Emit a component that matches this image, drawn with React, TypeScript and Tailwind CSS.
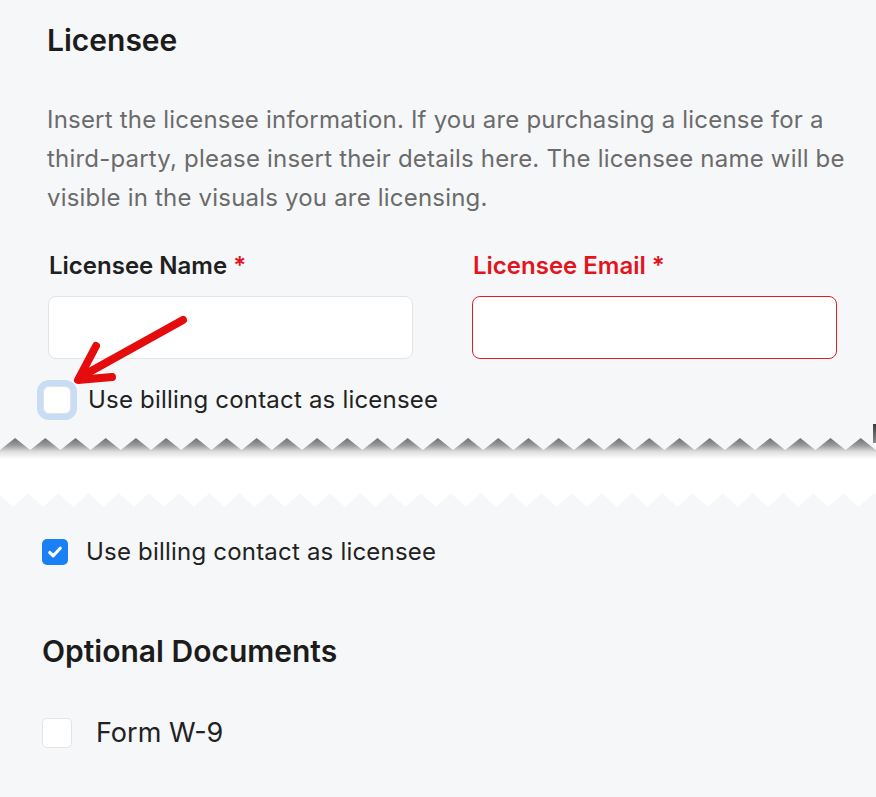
import React from "react";

const P = 30.2;

function tornPaths() {
  const topPts: string[] = [];
  for (let k = -1; k < 31; k++) {
    const x0 = k * P;
    topPts.push(`${x0.toFixed(1)},29`);
    topPts.push(`${(x0 + P / 2).toFixed(1)},17`);
  }
  const botPts: string[] = [];
  for (let k = 31; k >= -1; k--) {
    const xt = 13 + k * P;
    botPts.push(`${(xt + P / 2).toFixed(1)},72`);
    botPts.push(`${xt.toFixed(1)},86`);
  }
  const white = `M${topPts.join(" L")} L${botPts.join(" L")} Z`;
  const shade = `M${topPts.join(" L")} L900,38 L-40,38 Z`;
  return { white, shade };
}

function Torn() {
  const { white, shade } = tornPaths();
  return (
    <svg width="876" height="92" viewBox="0 0 876 92" className="block">
      <defs>
        <linearGradient id="sh" x1="0" y1="17" x2="0" y2="38" gradientUnits="userSpaceOnUse">
          <stop offset="0" stopColor="#6f6f6f" />
          <stop offset="0.35" stopColor="#9a9a9a" />
          <stop offset="0.65" stopColor="#dedede" />
          <stop offset="1" stopColor="#ffffff" />
        </linearGradient>
        <linearGradient id="mk" x1="0" y1="0" x2="0" y2="1">
          <stop offset="0" stopColor="#3a3a3a" />
          <stop offset="1" stopColor="#8a8a8a" />
        </linearGradient>
      </defs>
      <path d={white} fill="#ffffff" />
      <path d={shade} fill="url(#sh)" />
      <rect x="873" y="3" width="3" height="19" fill="url(#mk)" />
    </svg>
  );
}

export default function App() {
  const body = { fontFamily: "Inter, 'Liberation Sans', sans-serif" };
  return (
    <div
      className="relative w-[876px] h-[797px] overflow-hidden bg-[#f6f7f9] text-[#1f1f1f]"
      style={body}
    >
      <div className="pl-[47px] pr-[20px] pt-[23px]">
        <h2 className="text-[30px] leading-[34px] font-semibold text-[#1c1c1c]">Licensee</h2>
        <p className="mt-[43px] text-[24px] leading-[39px] tracking-[0.2px] text-[#6b6b6b] w-[815px]">
          Insert the licensee information. If you are purchasing a license for a third-party,
          please insert their details here. The licensee name will be visible in the visuals you
          are licensing.
        </p>
      </div>

      <div className="mt-[35px] pl-[48px] grid grid-cols-[365px_365px] gap-x-[59px]">
        <div>
          <div className="pl-[1px] text-[24px] leading-[28px] font-semibold text-[#202020]">
            Licensee Name <span className="text-[#e3141c]">*</span>
          </div>
          <div className="mt-[16px] h-[63px] rounded-[8px] border border-[#e2e4e8] bg-white" />
        </div>
        <div>
          <div className="pl-[1px] text-[24px] leading-[28px] font-semibold text-[#e3141c]">
            Licensee Email *
          </div>
          <div className="mt-[16px] h-[63px] rounded-[8px] border border-[#e31b23] bg-white" />
        </div>
      </div>

      <div className="mt-[27px] pl-[43px] flex items-center gap-[17px]">
        <div className="w-[28px] h-[28px] rounded-[6px] bg-white border border-[#dfe3ea] shadow-[0_0_0_6px_#c8dcf4]" />
        <span className="text-[24px] leading-[28px] tracking-[0.2px] text-[#222]">Use billing contact as licensee</span>
      </div>

      <div className="mt-[7px]">
        <Torn />
      </div>

      <div className="pl-[42px]">
        <div className="mt-[25px] flex items-center gap-[18px]">
          <div className="w-[26px] h-[26px] rounded-[5px] bg-[#1a80f5] flex items-center justify-center">
            <svg width="20" height="20" viewBox="0 0 16 16">
              <path d="M3.8 8.4 L6.6 11 L12.2 5" fill="none" stroke="#fff" strokeWidth="2.5" strokeLinecap="round" strokeLinejoin="round" />
            </svg>
          </div>
          <span className="text-[24px] leading-[28px] tracking-[0.2px] text-[#222]">Use billing contact as licensee</span>
        </div>

        <h2 className="mt-[68px] text-[30px] leading-[34px] font-semibold text-[#1c1c1c]">
          Optional Documents
        </h2>

        <div className="mt-[50px] flex items-center gap-[24px]">
          <div className="w-[30px] h-[30px] rounded-[5px] bg-white border border-[#e2e4e8]" />
          <span className="text-[27px] leading-[30px] text-[#222]">Form W-9</span>
        </div>
      </div>

      <svg
        className="absolute left-0 top-0 pointer-events-none"
        width="876"
        height="797"
        viewBox="0 0 876 797"
      >
        <path d="M183 320 L84 375" fill="none" stroke="#e40c0c" strokeWidth="8" strokeLinecap="round" />
        <path d="M96 346 L78 380 L112 377" fill="none" stroke="#e40c0c" strokeWidth="8" strokeLinecap="round" strokeLinejoin="round" />
      </svg>
    </div>
  );
}
